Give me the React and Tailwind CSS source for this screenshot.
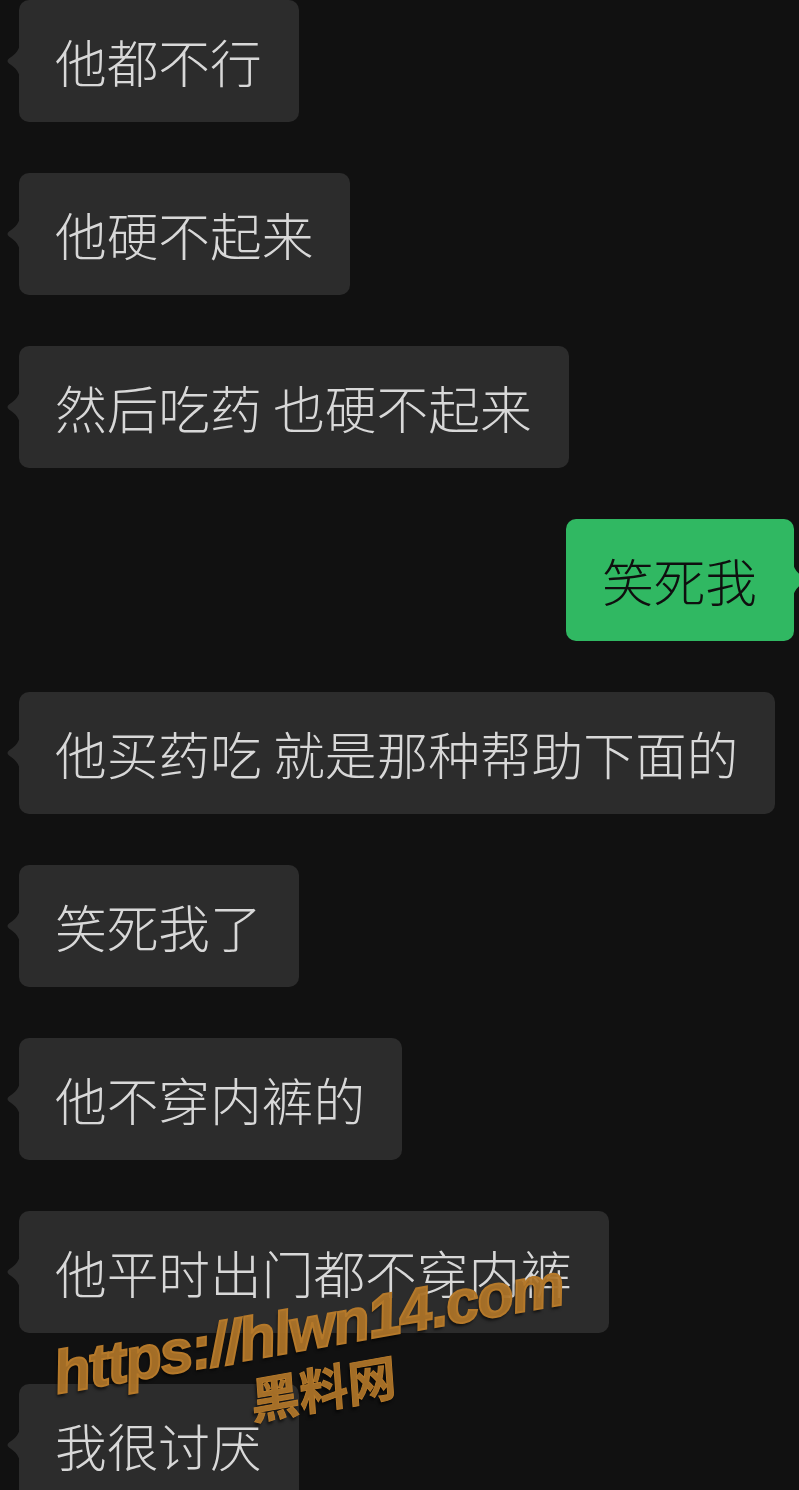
const messages = [
  { side: "left", text: "他都不行" },
  { side: "left", text: "他硬不起来" },
  { side: "left", text: "然后吃药 也硬不起来" },
  { side: "right", text: "笑死我" },
  { side: "left", text: "他买药吃 就是那种帮助下面的" },
  { side: "left", text: "笑死我了" },
  { side: "left", text: "他不穿内裤的" },
  { side: "left", text: "他平时出门都不穿内裤" },
  { side: "left", text: "我很讨厌" },
];

const font = {
  fontFamily: '"Noto Sans CJK SC", "Noto Sans", sans-serif',
};

// little pointer on the bubble edge
const Tail = ({ right }) => (
  <svg
    width="15"
    height="38"
    viewBox="0 0 15 38"
    className={`absolute top-[42px] ${
      right ? "-right-[14px] scale-x-[-1] fill-[#30b862]" : "-left-[14px] fill-[#2c2c2c]"
    }`}
  >
    <path d="M15 0 C15 7 11 12 4 16.5 Q1 19 4 21.5 C11 26 15 31 15 38 Z" />
  </svg>
);

const Bubble = ({ side, text }) => {
  const right = side === "right";
  return (
    <div className={`flex ${right ? "justify-end pr-[5px]" : "pl-[19px]"}`}>
      <div
        className={`relative h-[122px] flex items-center pl-[36px] pr-[37px] rounded-[10px] ${
          right ? "bg-[#30b862] text-[#0f0f0f]" : "bg-[#2c2c2c] text-[#d8d8d8]"
        }`}
      >
        <Tail right={right} />
        <span className="text-[51.7px] font-light leading-none whitespace-pre" style={font}>
          {text}
        </span>
      </div>
    </div>
  );
};

export default function App() {
  return (
    <div className="relative w-[799px] h-[1490px] overflow-hidden bg-[#111111]">
      <div className="flex flex-col gap-[51px]">
        {messages.map((m, i) => (
          <Bubble key={i} side={m.side} text={m.text} />
        ))}
      </div>

      {/* watermark */}
      <div className="absolute left-[54px] top-[1344px] origin-left -rotate-[10deg] pointer-events-none">
        <div className="text-[60px] leading-none font-bold italic tracking-[-1.5px] text-[#b5792a]/90 [-webkit-text-stroke:2px_#b5792a] [text-shadow:-2px_3px_3px_rgba(0,0,0,0.6)] [font-family:'Liberation_Sans',Arial,sans-serif]">
          https://hlwn14.com
        </div>
      </div>
      <div className="absolute left-[251px] top-[1374px] origin-left -rotate-[10deg] pointer-events-none">
        <div
          className="text-[49px] leading-none font-bold skew-x-[-6deg] text-[#b5792a]/90 [-webkit-text-stroke:1px_#b5792a] [text-shadow:-2px_3px_3px_rgba(0,0,0,0.6)]"
          style={font}
        >
          黑料网
        </div>
      </div>
    </div>
  );
}
